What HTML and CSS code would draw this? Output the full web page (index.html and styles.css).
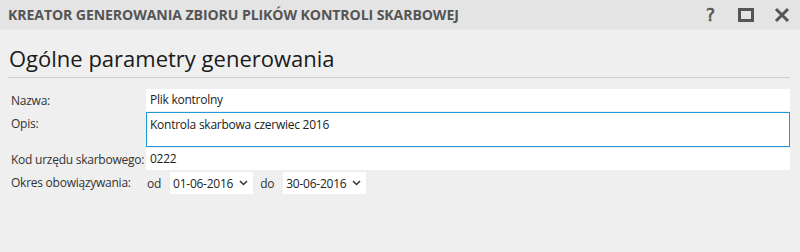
FILE: index.html
```html
<!DOCTYPE html>
<html lang="pl">
<head>
  <meta charset="UTF-8" />
  <title>Kreator generowania JPK</title>
  <link rel="stylesheet" href="styles.css">
</head>
<body>
  <div class="window">
    <div class="titlebar">
      <span class="title">KREATOR GENEROWANIA ZBIORU PLIKÓW KONTROLI SKARBOWEJ</span>
      <div class="controls">
        <span class="btn-help">?</span>
        <svg class="btn" width="16" height="14" viewBox="0 0 16 14"><rect x="1.5" y="1.5" width="13" height="11" fill="none" stroke="#555" stroke-width="3"/></svg>
        <svg class="btn" width="16" height="16" viewBox="0 0 16 16"><path d="M2 2 L14 14 M14 2 L2 14" stroke="#555" stroke-width="3"/></svg>
      </div>
    </div>

    <div class="content">
      <h2>Ogólne parametry generowania</h2>

      <div class="form">
        <div class="row">
          <label>Nazwa:</label>
          <div class="field">Plik kontrolny</div>
        </div>
        <div class="row">
          <label>Opis:</label>
          <div class="field textarea">Kontrola skarbowa czerwiec 2016</div>
        </div>
        <div class="row">
          <label>Kod urzędu skarbowego:</label>
          <div class="field">0222</div>
        </div>
        <div class="row">
          <label>Okres obowiązywania:</label>
          <div class="period">
            <span class="word">od</span>
            <div class="date">01-06-2016 <svg width="9" height="6" viewBox="0 0 9 6"><path d="M1 1 L4.5 4.5 L8 1" fill="none" stroke="#333" stroke-width="1.5"/></svg></div>
            <span class="word">do</span>
            <div class="date">30-06-2016 <svg width="9" height="6" viewBox="0 0 9 6"><path d="M1 1 L4.5 4.5 L8 1" fill="none" stroke="#333" stroke-width="1.5"/></svg></div>
          </div>
        </div>
      </div>
    </div>
  </div>
</body>
</html>
```

FILE: styles.css
```css
body {
  margin: 0;
  background: #efefef;
  font-family: 'Open Sans', sans-serif;
  color: #222;
}
.window {
  width: 800px;
  height: 252px;
  background: #efefef;
}
.titlebar {
  height: 29px;
  background: #e4e4e4;
  border-bottom: 1px solid #e9e9e9;
  display: flex;
  align-items: center;
  justify-content: space-between;
  padding: 0 10px 0 8px;
}
.title {
  font-weight: bold;
  font-size: 14.1px;
  letter-spacing: -0.1px;
  color: #555;
}
.controls {
  display: flex;
  align-items: center;
  gap: 20px;
}
.btn-help {
  font-family: 'DejaVu Sans', sans-serif;
  font-size: 17px;
  color: #555;
  -webkit-text-stroke: 0.6px #555;
  margin-right: 3px;
}
.content {
  padding: 13px 10px 0 8px;
}
h2 {
  margin: 0;
  padding: 0 0 4px 1px;
  font-weight: normal;
  font-size: 22px;
  color: #1a1a1a;
  border-bottom: 1px solid #cfcfcf;
}
.form {
  margin-top: 11px;
  display: flex;
  flex-direction: column;
  gap: 1px;
  font-size: 12px;
  letter-spacing: -0.25px;
}
.row {
  display: flex;
  align-items: flex-start;
}
label {
  width: 135px;
  padding: 3px 0 0 3px;
  color: #333;
}
.field {
  flex: 1;
  height: 22px;
  line-height: 21px;
  background: #fff;
  padding: 0 4px;
}
.field.textarea {
  height: 35px;
  border: 1px solid #1f9ad9;
  padding: 0 3px;
  box-sizing: border-box;
  line-height: 24px;
}
.period {
  display: flex;
  align-items: center;
  padding-top: 1px;
}
.word {
  padding: 0 9px 0 1px;
  color: #333;
}
.date {
  display: flex;
  align-items: center;
  gap: 6px;
  background: #fff;
  height: 22px;
  padding: 0 5px 0 3px;
  margin-right: 6px;
}
```
